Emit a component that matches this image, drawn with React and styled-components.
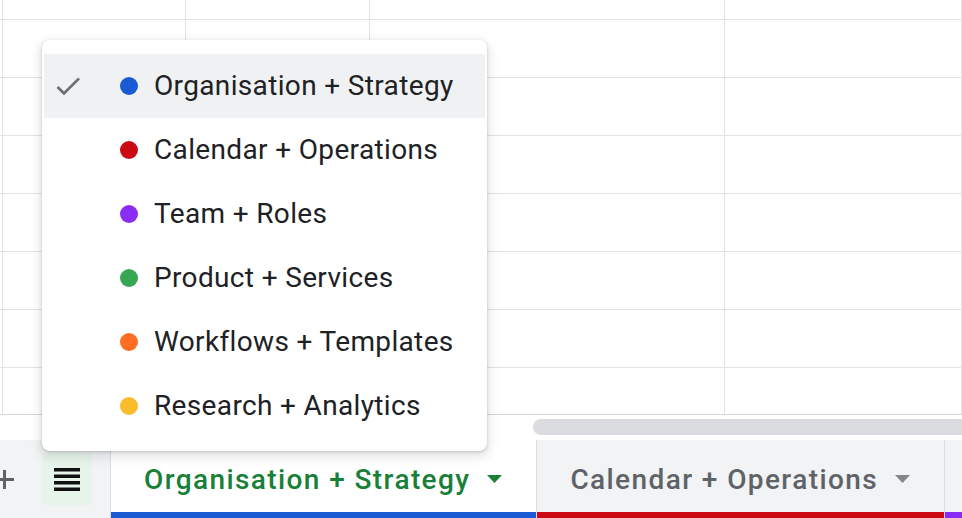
import styled, { createGlobalStyle } from "styled-components";

const GlobalStyle = createGlobalStyle`
    html, body {
        margin: 0;
        padding: 0;
        background: #ffffff;
        font-family: Roboto, "Liberation Sans", sans-serif;
    }
`

const sheets = [
    { name: "Organisation + Strategy", color: "#1a5ad2" },
    { name: "Calendar + Operations", color: "#cc0a14" },
    { name: "Team + Roles", color: "#8b2cf5" },
    { name: "Product + Services", color: "#37a652" },
    { name: "Workflows + Templates", color: "#ff6d22" },
    { name: "Research + Analytics", color: "#fbbc2c" },
]

const rows = 8
const cols = 5

const Check = () => (
    <svg width="32" height="32" viewBox="0 0 24 24">
        <path d="M9 16.17L4.83 12l-1.42 1.41L9 19 21 7l-1.41-1.41z" fill="#6b6e72" />
    </svg>
)

const Caret = ({ color }) => (
    <svg width="15" height="8" viewBox="0 0 15 8">
        <path d="M0 0h15L7.5 8z" fill={color} />
    </svg>
)

export default function App() {
    return (
        <SPage>
            <GlobalStyle />
            <SGrid>
                {Array.from({ length: rows * cols }).map((_, i) => (
                    <SCell key={i} $last={i >= (rows - 1) * cols} />
                ))}
            </SGrid>
            <SScrollRow>
                <SThumb />
            </SScrollRow>
            <STabBar>
                <SAddButton>
                    <svg width="19" height="19" viewBox="0 0 19 19">
                        <path d="M8 0h3v8h8v3h-8v8H8v-8H0V8h8z" fill="#5f6368" />
                    </svg>
                </SAddButton>
                <SListButton>
                    <svg width="26" height="23" viewBox="0 0 26 23">
                        <rect x="0" y="0" width="26" height="3.5" fill="#111" />
                        <rect x="0" y="6.5" width="26" height="3.5" fill="#111" />
                        <rect x="0" y="13" width="26" height="3.5" fill="#111" />
                        <rect x="0" y="19.5" width="26" height="3.5" fill="#111" />
                    </svg>
                </SListButton>
                <STabs>
                    {sheets.slice(0, 2).map((s, i) => (
                        <STab key={s.name} $active={i === 0} $color={s.color}>
                            {s.name}
                            <SCaret><Caret color={i === 0 ? "#188038" : "#80868b"} /></SCaret>
                        </STab>
                    ))}
                    <STabStub $color={sheets[2].color} title={sheets[2].name} />
                </STabs>
            </STabBar>
            <SMenu>
                {sheets.map((s, i) => (
                    <SMenuItem key={s.name} $selected={i === 0}>
                        <SCheckSlot>{i === 0 && <Check />}</SCheckSlot>
                        <SDot $color={s.color} />
                        <SLabel>{s.name}</SLabel>
                    </SMenuItem>
                ))}
            </SMenu>
        </SPage>
    )
}

const SPage = styled.div`
    position: relative;
    width: 962px;
    height: 518px;
    overflow: hidden;
    display: flex;
    flex-direction: column;
`

const SGrid = styled.div`
    height: 414px;
    flex-shrink: 0;
    display: grid;
    grid-template-columns: 3px 183px 184px 355px 1fr;
    grid-template-rows: 20px repeat(6, 58px) 1fr;
    border-bottom: 1px solid #d6d6d6;
`

const SCell = styled.div`
    border-right: 1px solid #e2e2e2;
    border-bottom: ${(p) => (p.$last ? "none" : "1px solid #e2e2e2")};
`

const SScrollRow = styled.div`
    height: 25px;
    flex-shrink: 0;
    display: flex;
    padding-left: 533px;
    padding-top: 4px;
    box-sizing: border-box;
    background: #ffffff;
`

const SThumb = styled.div`
    flex: 1;
    height: 16px;
    margin-right: -12px;
    border-radius: 8px;
    background: #dadce0;
`

const STabBar = styled.div`
    height: 78px;
    flex-shrink: 0;
    display: flex;
    align-items: stretch;
    background: #f1f3f4;
    overflow: hidden;
`

const SAddButton = styled.div`
    width: 40px;
    margin-left: -16px;
    flex-shrink: 0;
    display: flex;
    align-items: center;
    justify-content: center;
`

const SListButton = styled.div`
    width: 50px;
    height: 52px;
    margin-left: 18px;
    align-self: center;
    flex-shrink: 0;
    display: flex;
    align-items: center;
    justify-content: center;
    background: #e6f4ea;
    border-radius: 2px;
`

const STabs = styled.div`
    display: flex;
    margin-left: 18px;
`

const STab = styled.div`
    flex-shrink: 0;
    display: flex;
    align-items: center;
    padding: 0 34px 0 33px;
    border-left: 1px solid #dadce0;
    background: ${(p) => (p.$active ? "#ffffff" : "#f1f3f4")};
    color: ${(p) => (p.$active ? "#188038" : "#5f6368")};
    box-shadow: inset 0 -6px 0 ${(p) => p.$color};
    font-size: 28px;
    font-weight: 500;
    letter-spacing: 1.4px;
    white-space: nowrap;
`

const STabStub = styled.div`
    flex-shrink: 0;
    width: 80px;
    border-left: 1px solid #dadce0;
    box-shadow: inset 0 -6px 0 ${(p) => p.$color};
`

const SCaret = styled.span`
    display: flex;
    margin-left: 17px;
`

const SMenu = styled.div`
    position: absolute;
    left: 42px;
    top: 40px;
    width: 445px;
    box-sizing: border-box;
    padding: 14px 2px 13px;
    background: #ffffff;
    border-radius: 8px;
    box-shadow: 0 1px 3px rgba(60, 64, 67, 0.25), 0 4px 10px 3px rgba(60, 64, 67, 0.12);
`

const SMenuItem = styled.div`
    height: 64px;
    display: flex;
    align-items: center;
    padding-left: 8px;
    background: ${(p) => (p.$selected ? "#f0f1f3" : "transparent")};
`

const SCheckSlot = styled.div`
    width: 32px;
    height: 32px;
    flex-shrink: 0;
`

const SDot = styled.span`
    width: 18px;
    height: 18px;
    margin-left: 36px;
    border-radius: 50%;
    background: ${(p) => p.$color};
    flex-shrink: 0;
`

const SLabel = styled.span`
    margin-left: 16px;
    margin-top: -2px;
    font-size: 28px;
    letter-spacing: 0.35px;
    color: #202124;
    white-space: nowrap;
`
